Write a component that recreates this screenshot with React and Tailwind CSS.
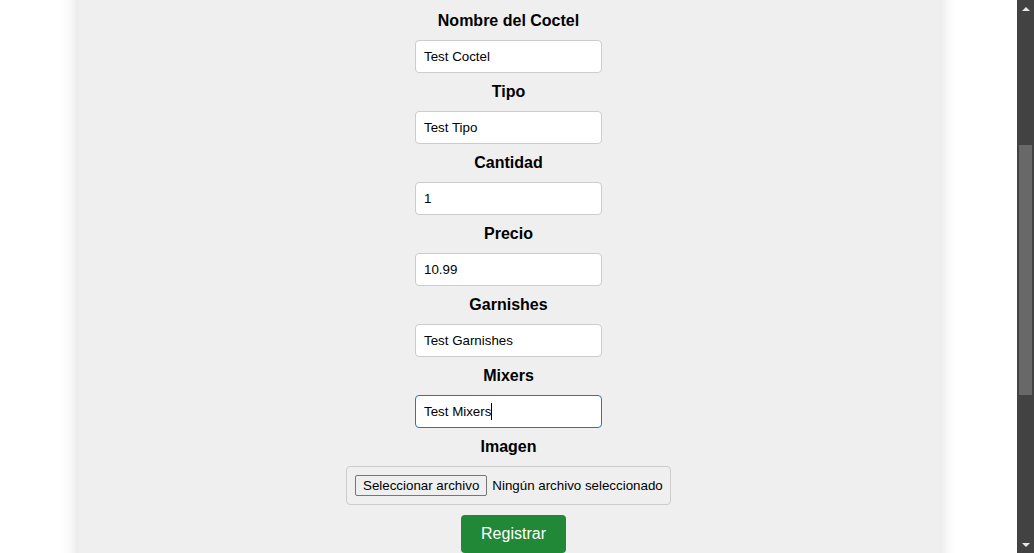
const fields = [
  { label: "Nombre del Coctel", value: "Test Coctel" },
  { label: "Tipo", value: "Test Tipo" },
  { label: "Cantidad", value: "1" },
  { label: "Precio", value: "10.99" },
  { label: "Garnishes", value: "Test Garnishes" },
  { label: "Mixers", value: "Test Mixers", focused: true },
];

const Field = ({ label, value, focused }) => (
  <div className="flex flex-col items-center">
    <label className="text-[16px] leading-[18px] font-bold text-black">{label}</label>
    <div
      className={`mt-[10px] mb-[10px] w-[187px] h-[33px] rounded-[4px] bg-white px-2 flex items-center text-[13.33px] text-black border ${
        focused ? "border-[#1a73e8]" : "border-[#cccccc]"
      }`}
    >
      <span>{value}</span>
      {focused && <span className="w-px h-[17px] bg-black" />}
    </div>
  </div>
);

const Scrollbar = () => (
  <div className="w-[17px] h-full bg-[#424242] flex flex-col items-center">
    <div className="h-[17px] flex items-center justify-center">
      <div className="w-0 h-0 border-l-[4px] border-r-[4px] border-b-[4px] border-l-transparent border-r-transparent border-b-[#e8e8e8]" />
    </div>
    <div className="flex-1 w-full px-[2px] pt-[128px] pb-[141px]">
      <div className="w-full h-full bg-[#686868]" />
    </div>
    <div className="h-[17px] flex items-center justify-center">
      <div className="w-0 h-0 border-l-[4px] border-r-[4px] border-t-[4px] border-l-transparent border-r-transparent border-t-[#e8e8e8]" />
    </div>
  </div>
);

export default function App() {
  return (
    <div className="h-[553px] w-[1034px] flex overflow-hidden bg-white font-['Liberation_Sans',Arial,sans-serif]">
      <div className="flex-1 h-full overflow-hidden">
        <div className="w-[862px] mx-auto -mt-[20px] h-[620px] bg-[#efefef] shadow-[0_0_16px_rgba(0,0,0,0.16)] flex flex-col items-center pt-[32px]">
          {fields.map((f) => (
            <Field key={f.label} {...f} />
          ))}
          <label className="text-[16px] leading-[18px] font-bold text-black">Imagen</label>
          <div className="mt-[10px] w-[325px] h-[39px] rounded-[4px] border border-[#cccccc] px-2 flex items-center gap-[5px] text-[13.33px] text-black whitespace-nowrap">
            <span className="shrink-0 h-[21px] px-[7px] flex items-center border border-[#767676] rounded-[2px] bg-[#efefef]">
              Seleccionar archivo
            </span>
            <span className="shrink-0">Ningún archivo seleccionado</span>
          </div>
          <button className="mt-[10px] ml-[10px] w-[105px] h-[38px] shrink-0 rounded-[4px] bg-[#218838] text-white text-[16px]">
            Registrar
          </button>
        </div>
      </div>
      <Scrollbar />
    </div>
  );
}
